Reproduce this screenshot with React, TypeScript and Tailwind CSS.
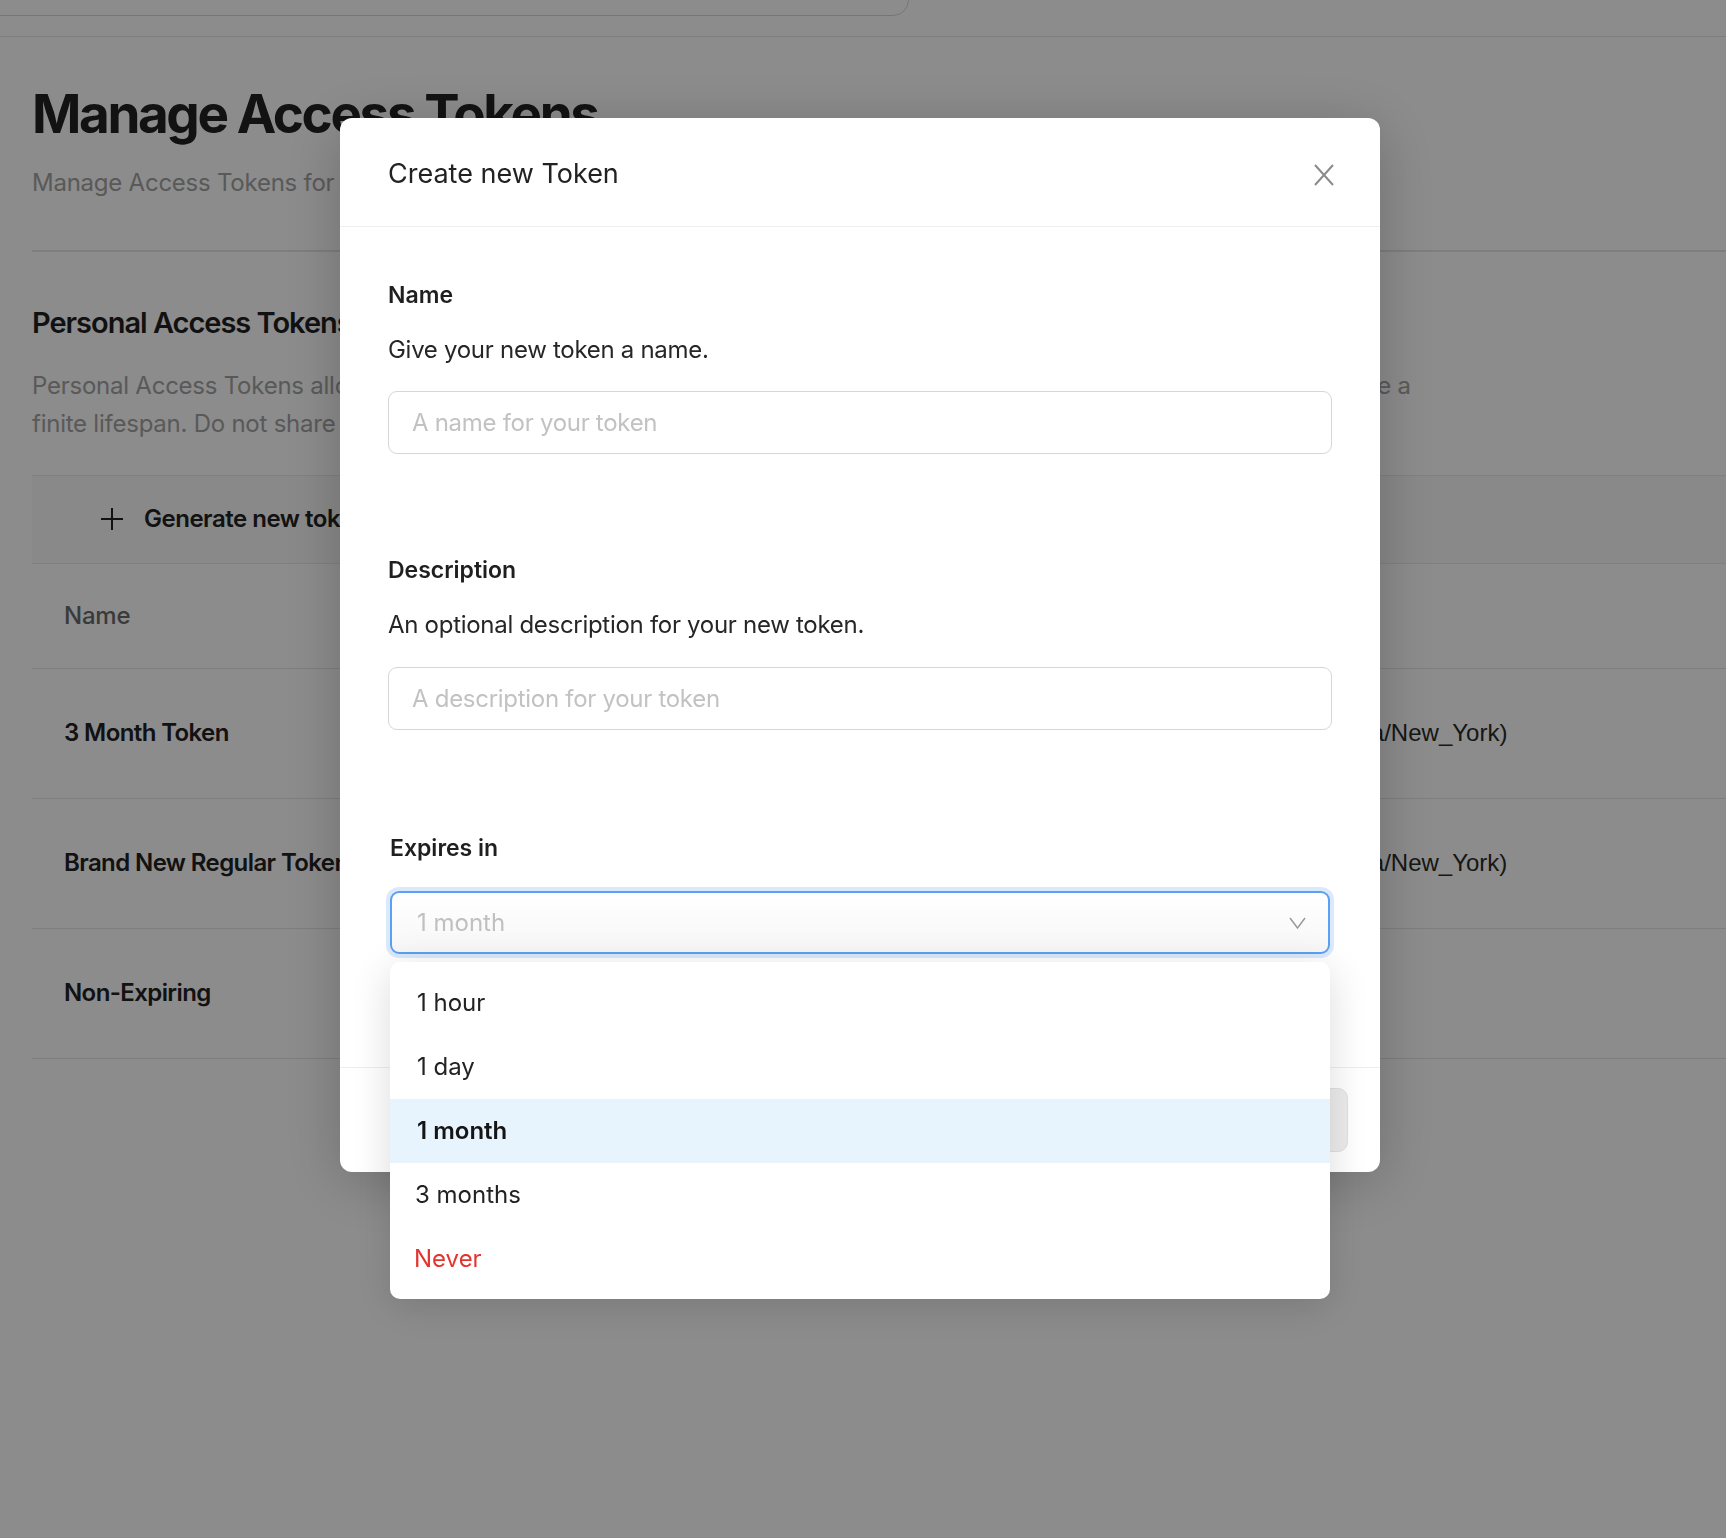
export default function App() {
  const rows = [
    { name: "3 Month Token", exp: "Jun 14, 2025, 10:32 AM (America/New_York)" },
    { name: "Brand New Regular Token", exp: "Apr 02, 2025, 04:18 PM (America/New_York)" },
    { name: "Non-Expiring", exp: "" },
  ];
  const items = ["1 hour", "1 day", "1 month", "3 months", "Never"];
  return (
    <div className="relative min-h-[1538px] overflow-hidden bg-white font-['Inter',sans-serif]">
      {/* top header */}
      <div className="h-[37px] overflow-hidden border-b-[1.5px] border-[#e5e5e5]">
        <div className="-ml-[20px] -mt-[36px] h-[52px] w-[929px] rounded-[16px] border-[1.5px] border-[#d8d8d8]" />
      </div>

      <div className="pl-[32px]">
        <h1 className="mt-[45px] whitespace-nowrap text-[53px] font-bold leading-[64px] tracking-[-0.045em] text-[#222]">
          Manage Access Tokens
        </h1>
        <p className="mt-[19px] whitespace-nowrap text-[24px] leading-[36px] tracking-[-0.01em] text-[#a3a3a3]">
          Manage Access Tokens for use with the API and command line tools.
        </p>
        <div className="mt-[49px] h-[1.5px] bg-[#e5e5e5]" />

        <h2 className="mt-[51px] whitespace-nowrap text-[29px] font-semibold leading-[40px] tracking-[-0.035em] text-[#1f1f1f]">
          Personal Access Tokens
        </h2>
        <div className="mt-[24px] text-[24px] leading-[38px] tracking-[-0.01em] text-[#a3a3a3]">
          <div className="whitespace-nowrap">
            Personal Access Tokens allow you to access the API on behalf of your own user account. Tokens are scoped and will have a
          </div>
          <div className="whitespace-nowrap">finite lifespan. Do not share your tokens with anyone.</div>
        </div>

        <div className="mt-[32px] flex h-[89px] items-center gap-[20px] border-b-[1.5px] border-t border-[#eaeaea] bg-[#f9f9f9] pl-[68px]">
          <svg width="24" height="24" viewBox="0 0 24 24" fill="none">
            <path d="M12 1v22M1 12h22" stroke="#222" strokeWidth="2" />
          </svg>
          <span className="whitespace-nowrap text-[24px] font-semibold tracking-[-0.02em] text-[#222]">Generate new token</span>
        </div>

        <div className="grid h-[105px] grid-cols-[620px_344px_1fr] items-center border-b-[1.5px] border-[#e5e5e5] pl-[32px] text-[24px] font-medium tracking-[-0.01em] text-[#6b6b6b]">
          <span>Name</span>
          <span>Created</span>
          <span>Expires</span>
        </div>
        {rows.map((r) => (
          <div
            key={r.name}
            className="grid h-[130px] grid-cols-[620px_344px_1fr] items-center border-b-[1.5px] border-[#e5e5e5] pl-[32px]"
          >
            <span className="whitespace-nowrap text-[24px] font-semibold tracking-[-0.025em] text-[#222]">{r.name}</span>
            <span className="whitespace-nowrap text-[24px] text-[#333]">Jan 10, 2025</span>
            <span className="whitespace-nowrap font-['Liberation_Sans',Arial,sans-serif] text-[24px] text-[#2a2a2a]">
              {r.exp}
            </span>
          </div>
        ))}
      </div>

      {/* overlay */}
      <div className="fixed inset-0 bg-black/45">
        <div className="absolute left-[340px] top-[118px] w-[1040px] rounded-[12px] bg-white shadow-[0_10px_60px_rgba(0,0,0,0.22)]">
          {/* header */}
          <div className="flex h-[109px] items-center justify-between border-b-[1.5px] border-[#eeeeee] pl-[48px] pr-[46px]">
            <h3 className="pt-[3px] text-[27px] leading-[36px] text-[#222]">Create new Token</h3>
            <svg width="20" height="22" viewBox="0 0 20 22" fill="none" className="mt-[5px]">
              <path d="M1 1L19 21M19 1L1 21" stroke="#8a8a8a" strokeWidth="2" />
            </svg>
          </div>

          {/* body */}
          <div className="px-[48px] pb-[113px] pt-[53px]">
            <div className="text-[23px] font-semibold leading-[30px] text-[#1f1f1f]">Name</div>
            <div className="mt-[22px] text-[24px] leading-[36px] tracking-[-0.012em] text-[#262626]">
              Give your new token a name.
            </div>
            <input
              className="mt-[23px] h-[63px] w-full rounded-[9px] border-[1.5px] border-[#d6d6d6] pl-[23px] text-[24px] tracking-[-0.012em] text-[#222] outline-none placeholder:text-[#c2c2c2]"
              placeholder="A name for your token"
            />

            <div className="mt-[101px] text-[23px] font-semibold leading-[30px] text-[#1f1f1f]">Description</div>
            <div className="mt-[22px] text-[24px] leading-[36px] tracking-[-0.012em] text-[#262626]">
              An optional description for your new token.
            </div>
            <input
              className="mt-[24px] h-[63px] w-full rounded-[9px] border-[1.5px] border-[#d6d6d6] pl-[23px] text-[24px] tracking-[-0.012em] text-[#222] outline-none placeholder:text-[#c2c2c2]"
              placeholder="A description for your token"
            />

            <div className="ml-[2px] mt-[103px] text-[23px] font-semibold leading-[30px] text-[#1f1f1f]">Expires in</div>

            <div className="relative mx-[2px] mt-[28px]">
              <div className="flex h-[63px] items-center justify-between rounded-[9px] border-2 border-[#5ba0f2] bg-gradient-to-b from-white to-[#f7f7f7] pl-[25px] pr-[22px] ring-4 ring-[#dbe9fc]">
                <span className="text-[24px] text-[#c0c0c0]">1 month</span>
                <svg width="17" height="12" viewBox="0 0 17 12" fill="none">
                  <path d="M1 1L8.5 11L16 1" stroke="#9a9a9a" strokeWidth="1.5" />
                </svg>
              </div>

              <div className="absolute left-0 right-0 top-[71px] z-10 rounded-[10px] bg-white pb-[8px] pt-[9px] shadow-[0_8px_40px_rgba(0,0,0,0.14)]">
                {items.map((it) => (
                  <div
                    key={it}
                    className={
                      it === "1 month"
                        ? "flex h-[64px] items-center bg-[#e8f4fd] pl-[27px] text-[24px] font-semibold text-[#151515]"
                        : it === "Never"
                          ? "flex h-[64px] items-center pl-[24px] text-[24px] text-[#e3342f]"
                          : it === "3 months"
                            ? "flex h-[64px] items-center pl-[25px] text-[24px] text-[#222]"
                            : "flex h-[64px] items-center pl-[27px] text-[24px] text-[#222]"
                    }
                  >
                    {it}
                  </div>
                ))}
              </div>
            </div>
          </div>

          {/* footer */}
          <div className="flex h-[105px] items-center justify-end gap-[16px] border-t-[1.5px] border-[#eeeeee] pr-[32px]">
            <button className="h-[64px] rounded-[10px] border-[1.5px] border-[#dcdcdc] bg-white px-[28px] text-[24px] text-[#333]">
              Cancel
            </button>
            <button className="h-[64px] rounded-[10px] border-[1.5px] border-[#e0e0e0] bg-[#ececec] px-[28px] text-[24px] text-[#aaa]">
              Create token
            </button>
          </div>
        </div>
      </div>
    </div>
  );
}
